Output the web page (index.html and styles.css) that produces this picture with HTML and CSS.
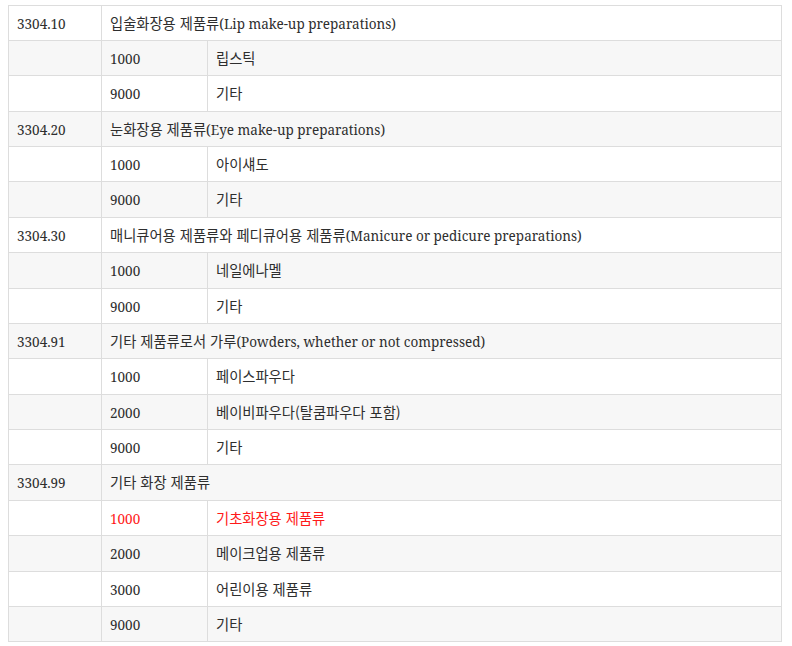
FILE: index.html
```html
<!DOCTYPE html>
<html lang="ko">
<head>
<meta charset="utf-8">
<title>HS 3304</title>
<link rel="stylesheet" href="styles.css">
</head>
<body>
<table class="hs-table">
  <colgroup>
    <col class="col-head">
    <col class="col-code">
    <col class="col-desc">
  </colgroup>
  <tbody>
    <tr><td>3304.10</td><td colspan="2"><span class="ko">입술화장용 제품류</span>(Lip make-up preparations)</td></tr>
    <tr><td></td><td>1000</td><td><span class="ko">립스틱</span></td></tr>
    <tr><td></td><td>9000</td><td><span class="ko">기타</span></td></tr>
    <tr><td>3304.20</td><td colspan="2"><span class="ko">눈화장용 제품류</span>(Eye make-up preparations)</td></tr>
    <tr><td></td><td>1000</td><td><span class="ko">아이섀도</span></td></tr>
    <tr><td></td><td>9000</td><td><span class="ko">기타</span></td></tr>
    <tr><td>3304.30</td><td colspan="2"><span class="ko">매니큐어용 제품류와 페디큐어용 제품류</span>(Manicure or pedicure preparations)</td></tr>
    <tr><td></td><td>1000</td><td><span class="ko">네일에나멜</span></td></tr>
    <tr><td></td><td>9000</td><td><span class="ko">기타</span></td></tr>
    <tr><td>3304.91</td><td colspan="2"><span class="ko">기타 제품류로서 가루</span>(Powders, whether or not compressed)</td></tr>
    <tr><td></td><td>1000</td><td><span class="ko">페이스파우다</span></td></tr>
    <tr><td></td><td>2000</td><td><span class="ko">베이비파우다(탈쿰파우다 포함)</span></td></tr>
    <tr><td></td><td>9000</td><td><span class="ko">기타</span></td></tr>
    <tr><td>3304.99</td><td colspan="2"><span class="ko">기타 화장 제품류</span></td></tr>
    <tr class="is-hot"><td></td><td>1000</td><td><span class="ko">기초화장용 제품류</span></td></tr>
    <tr><td></td><td>2000</td><td><span class="ko">메이크업용 제품류</span></td></tr>
    <tr><td></td><td>3000</td><td><span class="ko">어린이용 제품류</span></td></tr>
    <tr><td></td><td>9000</td><td><span class="ko">기타</span></td></tr>
  </tbody>
</table>
</body>
</html>
```
FILE: styles.css
```css
html, body {
  background: #ffffff;
}
body {
  margin: 4.5px 8px 0 8px;
  font-family: "Noto Serif", "Noto Sans CJK KR", serif;
  font-size: 13.5px;
  color: #2e2e2e;
}
.hs-table {
  width: 774px;
  border-collapse: collapse;
  table-layout: fixed;
}
.col-head { width: 93px; }
.col-code { width: 106px; }
.hs-table td {
  border: 1px solid #dddddd;
  padding: 9px 8px 7px 8px;
  line-height: 18.375px;
  height: 18.375px;
  vertical-align: middle;
  white-space: nowrap;
}
.ko {
  font-family: "Noto Sans CJK KR", sans-serif;
  font-size: 14.3px;
  line-height: 0;
}
.hs-table tr:nth-child(even) td {
  background: #f7f7f7;
}
.hs-table tr.is-hot td {
  color: #ff1a1a;
}
```
